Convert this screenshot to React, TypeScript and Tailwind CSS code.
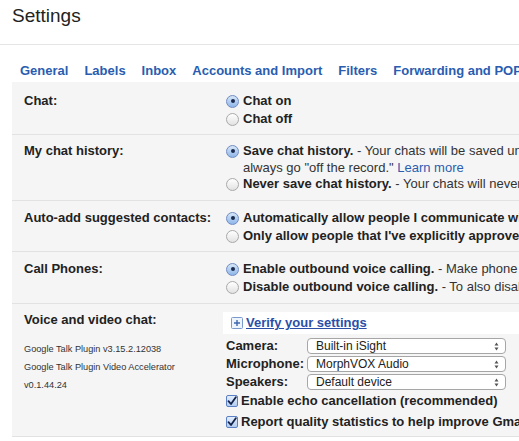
import React from 'react'

const tabs = ['General', 'Labels', 'Inbox', 'Accounts and Import', 'Filters', 'Forwarding and POP/IMAP', 'Chat', 'Web Clips', 'Labs']

function Radio({ checked }: { checked?: boolean }) {
  return checked ? (
    <span className="w-[13px] h-[13px] shrink-0 rounded-full border border-[#6f8cc4] bg-gradient-to-b from-[#d7e6f8] to-[#8fb6e9] flex items-center justify-center">
      <span className="w-[4px] h-[4px] rounded-full bg-[#1b2b4f]" />
    </span>
  ) : (
    <span className="w-[13px] h-[13px] shrink-0 rounded-full border border-[#a9a9a9] bg-gradient-to-b from-white to-[#e2e2e2]" />
  )
}

function Check() {
  return (
    <span className="w-[12px] h-[12px] shrink-0 rounded-[2px] border border-[#5a7fc4] bg-gradient-to-b from-[#e4eefb] to-[#b3cdf0] flex items-center justify-center">
      <svg width="10" height="10" viewBox="0 0 10 10">
        <path d="M1.5 5.2 L4 8 L8.8 1.2" fill="none" stroke="#13224a" strokeWidth="1.8" strokeLinecap="round" strokeLinejoin="round" />
      </svg>
    </span>
  )
}

function Option({ checked, bold, rest }: { checked?: boolean; bold: string; rest?: string }) {
  return (
    <div className="h-[18px] flex items-center gap-[4px] whitespace-nowrap">
      <Radio checked={checked} />
      <span>
        <b>{bold}</b>
        {rest && <span className="text-[#333]">{rest}</span>}
      </span>
    </div>
  )
}

function Select({ label, value }: { label: string; value: string }) {
  return (
    <div className="h-[18px] flex items-center">
      <span className="w-[81px] font-bold">{label}</span>
      <div className="w-[199px] h-[16px] bg-white border border-[#a6a6a6] rounded-[4px] flex items-center justify-between pl-[8px] pr-[6px] text-[12px] font-normal text-[#222]">
        <span>{value}</span>
        <svg width="5" height="9" viewBox="0 0 5 9">
          <path d="M2.5 0.5 L4.5 3.5 H0.5 Z M2.5 8.5 L4.5 5.5 H0.5 Z" fill="#555" />
        </svg>
      </div>
    </div>
  )
}

function Row({ label, children, pad }: { label: React.ReactNode; children: React.ReactNode; pad: string }) {
  return (
    <div className={`flex pl-[12px] ${pad} border-b border-[#e2e2e2]`}>
      <div className="w-[202px] shrink-0 font-bold">{label}</div>
      <div className="flex-1">{children}</div>
    </div>
  )
}

export default function App() {
  return (
    <div className="w-[519px] h-[441px] overflow-hidden bg-white font-['Liberation_Sans',Arial,sans-serif] text-[#222]">
      <div className="w-[1000px]">
        <div className="h-[45px] border-b border-[#e5e5e5] pl-[12px] pt-[5px] text-[19px] leading-[22px] text-[#222]">
          Settings
        </div>
        <nav className="h-[37px] pt-[17px] pl-[20px] flex gap-[16px] text-[13px] leading-[17px] font-bold text-[#2a5db0] whitespace-nowrap">
          {tabs.map(t => (
            <span key={t}>{t}</span>
          ))}
        </nav>

        <div className="ml-[12px] bg-[#f5f5f5] text-[13px] leading-[18px]">
          <Row label="Chat:" pad="pt-[10px] pb-[6px]">
            <Option checked bold="Chat on" />
            <Option bold="Chat off" />
          </Row>

          <Row label="My chat history:" pad="pt-[7px] pb-[7px]">
            <Option checked bold="Save chat history." rest=" - Your chats will be saved unless you or a contact you chat with chooses to" />
            <div className="pl-[17px] h-[15px] leading-[15px] text-[#333] whitespace-nowrap">
              always go "off the record." <span className="text-[#2a5db0]">Learn more</span>
            </div>
            <Option bold="Never save chat history." rest=" - Your chats will never be saved." />
          </Row>

          <Row label="Auto-add suggested contacts:" pad="pt-[8px] pb-[6px]">
            <Option checked bold="Automatically allow people I communicate with often to chat with me and see when I'm online" />
            <Option bold="Only allow people that I've explicitly approved to chat with me and see when I'm online" />
          </Row>

          <Row label="Call Phones:" pad="pt-[8px] pb-[7px]">
            <Option checked bold="Enable outbound voice calling." rest=" - Make phone calls from Gmail." />
            <Option bold="Disable outbound voice calling." rest=" - To also disable incoming calls, turn chat off." />
          </Row>

          <Row
            pad="pt-[7px] pb-[4px]"
            label={
              <div>
                <div>Voice and video chat:</div>
                <div className="mt-[11px] font-normal text-[9.2px] leading-[18px] text-[#333]">
                  <div>Google Talk Plugin v3.15.2.12038</div>
                  <div>Google Talk Plugin Video Accelerator</div>
                  <div>v0.1.44.24</div>
                </div>
              </div>
            }
          >
            <div className="ml-[-3px] h-[22px] mt-[1px] bg-white flex items-center gap-[3px] pl-[8px]">
              <svg width="12" height="12" viewBox="0 0 12 12">
                <rect x="0.5" y="0.5" width="11" height="11" rx="1" fill="#eef4fb" stroke="#7a9acb" />
                <path d="M6 3 V9 M3 6 H9" stroke="#3d66b0" strokeWidth="1.4" />
              </svg>
              <span className="font-bold underline text-[#2a4fa8]">Verify your settings</span>
            </div>
            <div className="mt-[3px]">
              <Select label="Camera:" value="Built-in iSight" />
              <Select label="Microphone:" value="MorphVOX Audio" />
              <Select label="Speakers:" value="Default device" />
            </div>
            <div className="h-[20px] flex items-center gap-[3px] font-bold whitespace-nowrap">
              <Check />
              <span>Enable echo cancellation (recommended)</span>
            </div>
            <div className="h-[21px] flex items-center gap-[3px] font-bold whitespace-nowrap">
              <Check />
              <span>Report quality statistics to help improve Gmail voice and video chat</span>
            </div>
          </Row>
        </div>
      </div>
    </div>
  )
}
